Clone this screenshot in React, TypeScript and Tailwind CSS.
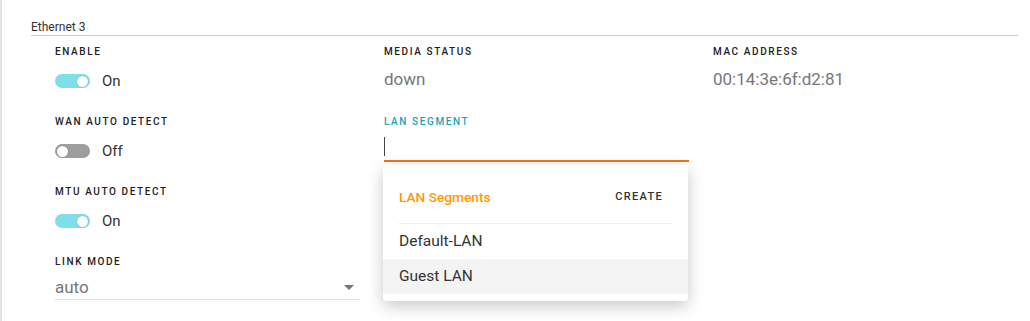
import React from "react";

const FONT = { fontFamily: "Roboto, 'Noto Sans', Arial, sans-serif" };

function Label({ children, active }: { children: React.ReactNode; active?: boolean }) {
  return (
    <div
      className={`h-[14px] text-[10px] leading-[14px] font-medium uppercase tracking-[0.16em] ${
        active ? "text-[#1aa3b6]" : "text-[#222]"
      }`}
    >
      {children}
    </div>
  );
}

function Toggle({ on }: { on: boolean }) {
  return (
    <div className="mt-[11px] flex h-[22px] items-center">
      <div
        className={`relative h-[14px] w-[35px] rounded-full ${on ? "bg-[#80deea]" : "bg-[#9e9e9e]"}`}
      >
        <span
          className={`absolute top-[1.5px] h-[11px] w-[11px] rounded-full bg-white shadow-[0_0_1px_rgba(0,0,0,0.4)] ${
            on ? "right-[2px]" : "left-[2px]"
          }`}
        />
      </div>
      <span className="ml-[12px] text-[15px] text-[#333]">{on ? "On" : "Off"}</span>
    </div>
  );
}

function Value({ children }: { children: React.ReactNode }) {
  return (
    <div className="mt-[10px] flex h-[22px] items-center text-[17px] text-[#777]">{children}</div>
  );
}

export default function App() {
  return (
    <div className="h-[321px] w-[1030px] overflow-hidden bg-white" style={FONT}>
      <div className="h-full border-l-2 border-[#e4e4e4] pl-[29px] pr-[12px] pt-[20px]">
        <div className="border-b border-[#c9c9c9] pb-[1px] text-[12px] leading-[14px] text-[#333]">
          Ethernet 3
        </div>

        <div className="grid grid-cols-[329px_329px_1fr] auto-rows-[70px] pl-[24px] pt-[9px]">
          <div>
            <Label>Enable</Label>
            <Toggle on />
          </div>
          <div>
            <Label>Media Status</Label>
            <Value>down</Value>
          </div>
          <div>
            <Label>MAC Address</Label>
            <Value>00:14:3e:6f:d2:81</Value>
          </div>

          <div>
            <Label>WAN Auto Detect</Label>
            <Toggle on={false} />
          </div>
          <div className="relative col-span-2">
            <Label active>LAN Segment</Label>
            <div className="mt-[8px] flex h-[25px] w-[305px] items-start border-b-2 border-[#e8761e]">
              <span className="h-[19px] w-[1px] bg-[#444]" />
            </div>

            <div className="absolute left-[-1px] top-[50px] z-10 w-[305px] rounded-[4px] bg-white pb-[7px] pt-[20px] shadow-[0_5px_16px_rgba(0,0,0,0.22)]">
              <div className="mx-[16px] border-b border-[#eeeeee] pb-[14px]">
                <div className="flex h-[24px] items-center justify-between">
                  <span className="text-[13.7px] font-medium text-[#ff9800]">LAN Segments</span>
                  <span className="mr-[9px] text-[11px] font-medium tracking-[0.12em] text-[#333]">
                    CREATE
                  </span>
                </div>
              </div>
              <div className="flex h-[35px] items-center px-[16px] text-[15.5px] text-[#333]">
                Default-LAN
              </div>
              <div className="flex h-[35px] items-center bg-[#f4f4f4] px-[16px] text-[15.5px] text-[#333]">
                Guest LAN
              </div>
            </div>
          </div>

          <div>
            <Label>MTU Auto Detect</Label>
            <Toggle on />
          </div>
          <div />
          <div />

          <div>
            <Label>Link Mode</Label>
            <div className="mt-[7px] flex h-[24px] w-[305px] items-center justify-between border-b border-[#e0e0e0]">
              <span className="text-[17px] text-[#777]">auto</span>
              <span className="mr-[6px] h-0 w-0 border-x-[5px] border-t-[5px] border-x-transparent border-t-[#777]" />
            </div>
          </div>
        </div>
      </div>
    </div>
  );
}
